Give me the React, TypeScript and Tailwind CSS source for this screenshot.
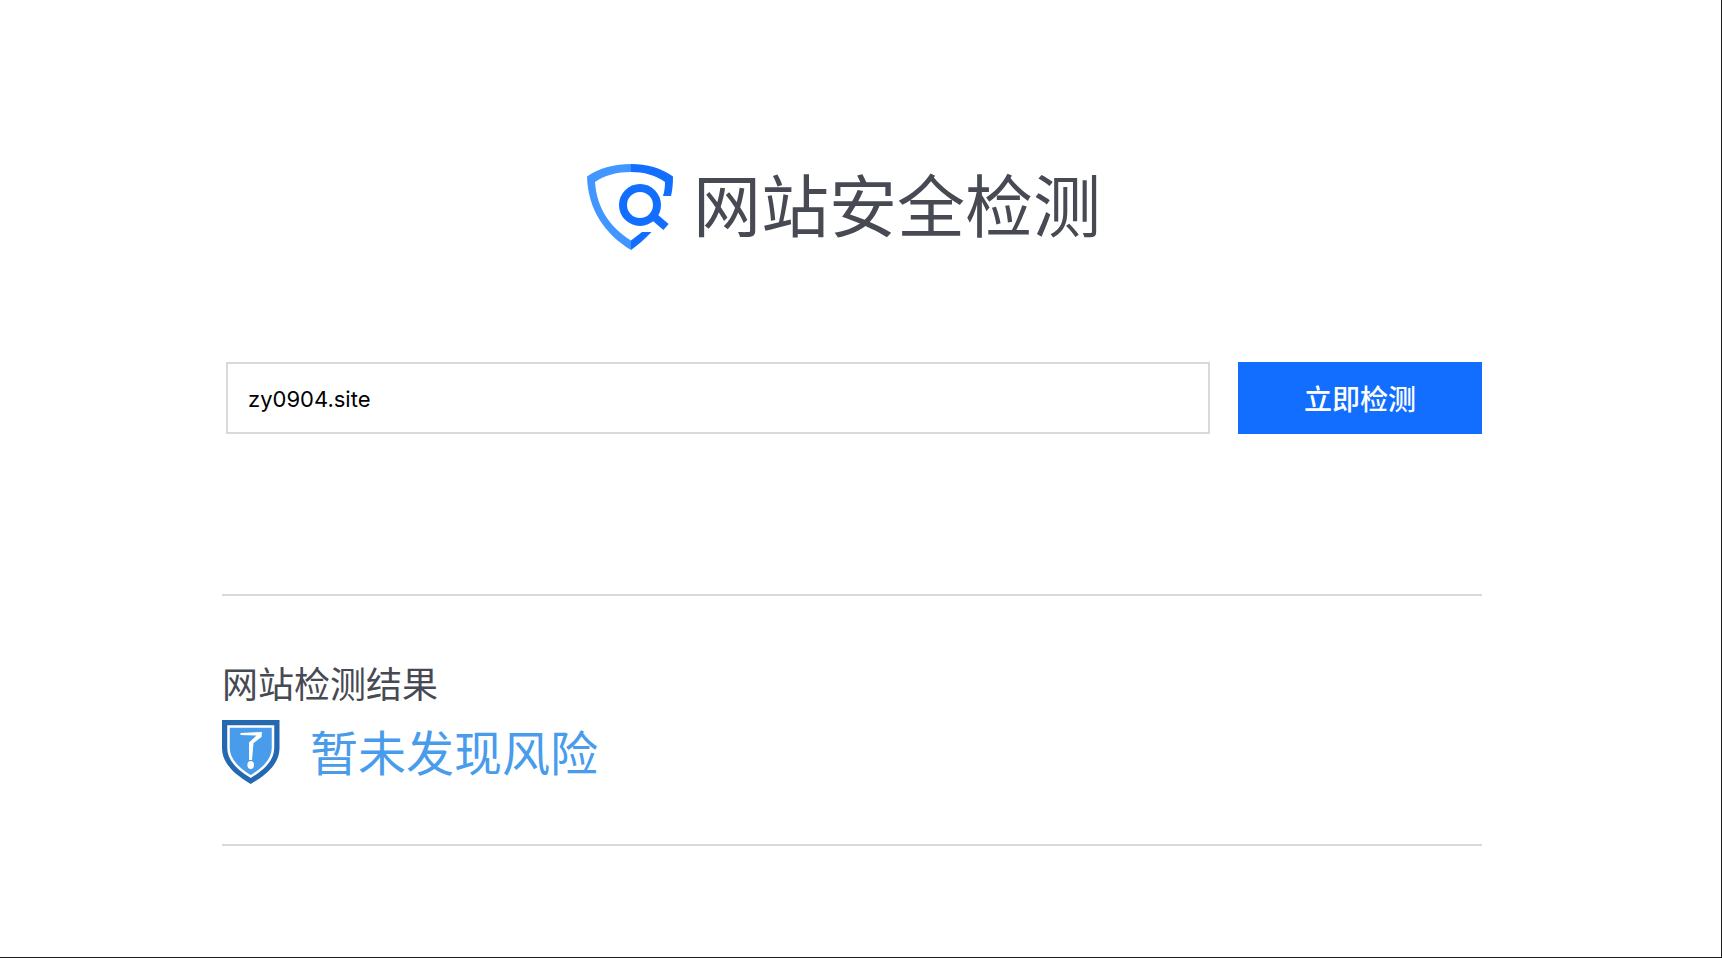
import React, { useState } from 'react';

const LogoIcon = () => (
    <svg viewBox="0 0 86 86" className="w-[86px] h-[86px]" fill="none" aria-hidden="true">
        <path
            d="M44 0C28 0 12 4 0 12.500C1 46 18 70 44 86V76.500C23 63 10 45 8 18C18 11 30 8 44 8Z"
            fill="#4196ff"
        />
        <path d="M44 0C60 0 74 4 86 12.500C86 20 85.500 26 84 32H76C77.500 27 78 23 78 18C68 11 57 8 44 8Z" fill="#126eff"/>
        <path d="M44 76.500L55 68H64.500C58 75 51 81 44 86Z" fill="#126eff"/>
        <circle cx="53" cy="41" r="17" stroke="#126eff" strokeWidth="8"/>
        <path d="M65 51L79 63" stroke="#126eff" strokeWidth="8"/>
    </svg>
);

const RiskShield = () => (
    <svg viewBox="0 0 58 64" className="w-[58px] h-16" aria-hidden="true">
        <path d="M0 0H57.500V28C57.500 43 46 54 28.700 64C12 54 0 43 0 28Z" fill="#2468b2"/>
        <path
            d="M6.500 6.500H51V28C51 39.500 43 48 28.700 56.500C14.500 48 6.500 39.500 6.500 28Z"
            fill="#499cec"
            stroke="#fff"
            strokeWidth="2.500"
        />
        <path d="M18.500 13L40 12L39.500 17L31.500 23L30 40H27V22.500L34.500 15.500L18.500 15Z" fill="#fff"/>
        <ellipse cx="28.700" cy="45" rx="3.300" ry="4" fill="#fff"/>
    </svg>
);

const App = () => {
    const [site, setSite] = useState('zy0904.site');

    return (
        <div className="min-h-screen bg-white border-r border-b border-[#1b1b1d] pr-[17px] font-['Noto_Sans_CJK_SC',sans-serif]">
            <main className="w-full max-w-[1260px] mx-auto pt-41">
                {/* Logo */}
                <h1 className="flex items-start justify-center gap-5 pr-4 text-[68px] leading-[78px] text-[#474953]">
                    <LogoIcon/>
                    <span>网站安全检测</span>
                </h1>

                {/* Search */}
                <form className="flex gap-7 mt-28 pl-1" onSubmit={(e) => e.preventDefault()}>
                    <input
                        type="text"
                        aria-label="网站地址"
                        value={site}
                        onChange={(e) => setSite(e.target.value)}
                        className="flex-1 min-w-0 h-18 px-5 pt-[2px] border-2 border-[#d8d8df] outline-none text-[22px] text-black font-['Inter',sans-serif]"
                    />
                    <button type="submit" className="w-[244px] h-18 bg-[#126eff] text-white text-[28px] font-medium">
                        立即检测
                    </button>
                </form>

                {/* Result */}
                <section className="mt-40 pt-[66px] pb-[60px] border-y-2 border-[#d8d8df]">
                    <h2 className="text-[36px] leading-10 text-[#474953]">网站检测结果</h2>
                    <div className="flex items-start gap-[30px] mt-[18px] text-[48px] leading-15 text-[#499cec]">
                        <RiskShield/>
                        <p>暂未发现风险</p>
                    </div>
                </section>
            </main>
        </div>
    );
};

export default App;
